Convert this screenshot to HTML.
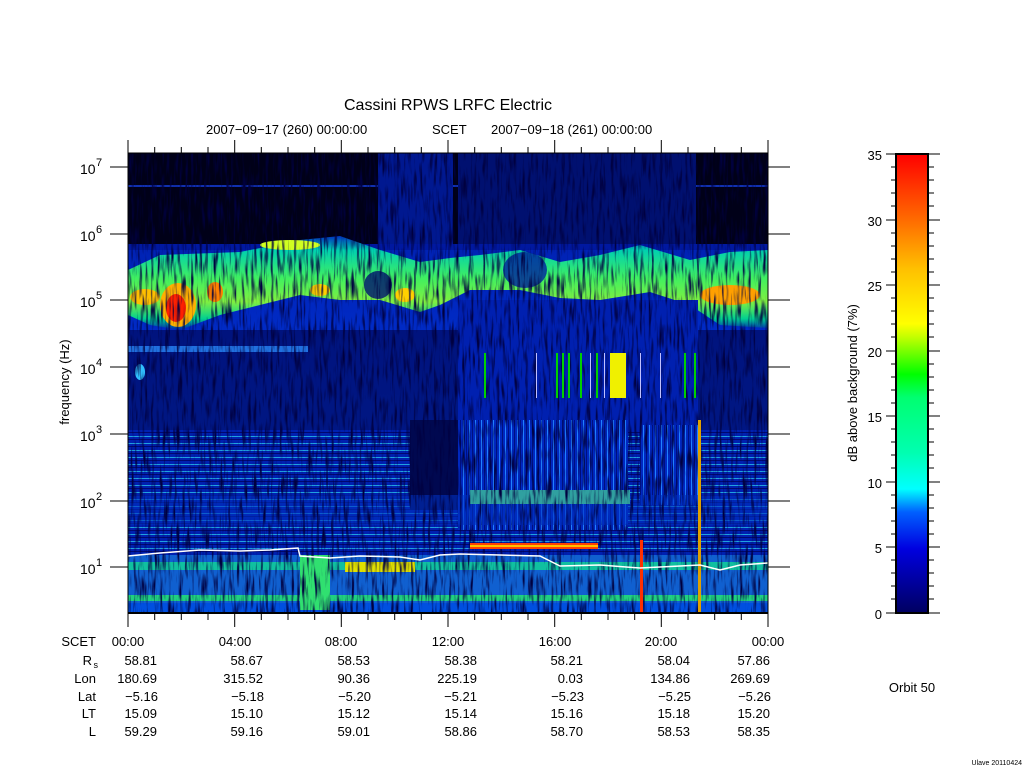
<!DOCTYPE html>
<html><head><meta charset="utf-8"><style>
html,body{margin:0;padding:0;background:#fff;}
body{width:1024px;height:768px;position:relative;overflow:hidden;font-family:"Liberation Sans",sans-serif;color:#000;}
svg{position:absolute;left:0;top:0;}
text{font-family:"Liberation Sans",sans-serif;fill:#000;}
</style></head><body>
<svg width="1024" height="768" viewBox="0 0 1024 768" font-size="13">
<defs>
<linearGradient id="cb" x1="0" y1="1" x2="0" y2="0">
<stop offset="0" stop-color="#000060"/>
<stop offset="0.14" stop-color="#0000e0"/>
<stop offset="0.22" stop-color="#0060ff"/>
<stop offset="0.27" stop-color="#00ffff"/>
<stop offset="0.35" stop-color="#00ffb0"/>
<stop offset="0.47" stop-color="#00ff70"/>
<stop offset="0.52" stop-color="#00ff00"/>
<stop offset="0.6" stop-color="#c0ff00"/>
<stop offset="0.63" stop-color="#ffff00"/>
<stop offset="0.75" stop-color="#ffc000"/>
<stop offset="0.85" stop-color="#ff7000"/>
<stop offset="1" stop-color="#ff0000"/>
</linearGradient>
<linearGradient id="band" x1="0" y1="0" x2="0" y2="1">
<stop offset="0" stop-color="#0030c0"/>
<stop offset="0.15" stop-color="#00d0b0"/>
<stop offset="0.45" stop-color="#40f060"/>
<stop offset="0.7" stop-color="#80f040"/>
<stop offset="0.88" stop-color="#00d090"/>
<stop offset="1" stop-color="#0020b0"/>
</linearGradient>
<linearGradient id="low" x1="0" y1="0" x2="0" y2="1">
<stop offset="0" stop-color="#0018a0"/>
<stop offset="0.5" stop-color="#0030d0"/>
<stop offset="0.8" stop-color="#0040e0"/>
<stop offset="1" stop-color="#10a0d0"/>
</linearGradient>
<pattern id="vl" width="6" height="10" patternUnits="userSpaceOnUse">
<rect width="6" height="10" fill="#0028c0"/><rect x="1" width="1" height="10" fill="#2080ff"/><rect x="4" width="1" height="10" fill="#001080"/>
</pattern>
<pattern id="hl" width="10" height="7" patternUnits="userSpaceOnUse">
<rect width="10" height="7" fill="#0020b0"/><rect y="2" width="10" height="1" fill="#20a0e0"/><rect y="5" width="10" height="1" fill="#000870"/>
</pattern>
<filter id="nz" x="0" y="0" width="100%" height="100%">
<feTurbulence type="fractalNoise" baseFrequency="0.35 0.04" numOctaves="2" seed="3"/>
<feColorMatrix type="matrix" values="0 0 0 0 0  0 0 0 0 0  0 0 0 0 0.05  3 0 0 0 -1.4"/>
</filter>
</defs>

<rect x="128" y="153" width="640" height="460" fill="url(#low)"/>
<rect x="128" y="153" width="640" height="95" fill="#000018"/>
<rect x="128" y="185" width="640" height="2" fill="#1030b0"/>
<rect x="378" y="153" width="75" height="95" fill="#001890"/>
<rect x="458" y="153" width="238" height="95" fill="#001070"/>
<rect x="128" y="244" width="640" height="6" fill="#0018a0"/>
<path d="M128 270 L160 255 L240 252 L300 240 L340 236 L380 250 L420 262 L450 258 L480 255 L520 250 L560 262 L600 255 L640 245 L690 260 L730 252 L768 250 L768 328 L720 325 L690 305 L650 292 L600 300 L560 298 L520 290 L470 290 L440 305 L420 312 L380 300 L340 300 L300 295 L260 305 L220 315 L180 330 L150 325 L128 315 Z" fill="url(#band)"/>
<ellipse cx="525" cy="270" rx="22" ry="18" fill="#0020a0" opacity="0.8"/>
<ellipse cx="378" cy="285" rx="14" ry="14" fill="#001070" opacity="0.8"/>
<ellipse cx="178" cy="305" rx="18" ry="22" fill="#ffb000"/>
<ellipse cx="176" cy="308" rx="10" ry="14" fill="#ff2000"/>
<ellipse cx="145" cy="297" rx="15" ry="8" fill="#ffc000"/>
<ellipse cx="215" cy="292" rx="8" ry="10" fill="#ff8000"/>
<ellipse cx="730" cy="295" rx="30" ry="10" fill="#ffa000"/>
<ellipse cx="405" cy="295" rx="10" ry="7" fill="#ffd000"/>
<ellipse cx="320" cy="290" rx="10" ry="6" fill="#ffd000"/>
<ellipse cx="290" cy="245" rx="30" ry="5" fill="#d0ff20"/>
<rect x="128" y="330" width="640" height="100" fill="#000a60" opacity="0.7"/>
<rect x="458" y="300" width="240" height="130" fill="#0020b0"/>
<rect x="128" y="346" width="180" height="6" fill="#2070e0"/>
<ellipse cx="140" cy="372" rx="5" ry="8" fill="#30c0ff"/>
<rect x="128" y="430" width="640" height="183" fill="url(#hl)"/>
<rect x="458" y="420" width="170" height="110" fill="url(#vl)"/>
<rect x="640" y="425" width="60" height="80" fill="url(#vl)"/>
<rect x="410" y="420" width="48" height="90" fill="#000850"/>
<rect x="128" y="495" width="640" height="30" fill="#0030c0" opacity="0.6"/>
<rect x="470" y="490" width="160" height="14" fill="#30a0a0"/>
<rect x="128" y="555" width="640" height="58" fill="#1060d0"/>
<rect x="128" y="562" width="640" height="8" fill="#10c0a0"/>
<rect x="128" y="595" width="640" height="6" fill="#20d080"/>
<rect x="128" y="603" width="640" height="10" fill="#0050e0"/>
<rect x="300" y="555" width="30" height="55" fill="#30e070"/>
<rect x="345" y="562" width="70" height="10" fill="#e0e000"/>
<rect x="128" y="153" width="640" height="460" filter="url(#nz)"/>
<rect x="610" y="353" width="16" height="45" fill="#f0f000"/>
<g fill="#00d000">
<rect x="484" y="353" width="2" height="45"/><rect x="556" y="353" width="2" height="45"/><rect x="562" y="353" width="2" height="45"/><rect x="568" y="353" width="2" height="45"/><rect x="580" y="353" width="2" height="45"/><rect x="596" y="353" width="2" height="45"/><rect x="684" y="353" width="2" height="45"/><rect x="694" y="353" width="2" height="45"/>
</g>
<g fill="#c0c0ff">
<rect x="536" y="353" width="1" height="45"/><rect x="590" y="353" width="1" height="45"/><rect x="604" y="353" width="1" height="45"/><rect x="640" y="353" width="1" height="45"/><rect x="660" y="353" width="1" height="45"/>
</g>
<rect x="470" y="543" width="128" height="6" fill="#ff4000"/>
<rect x="470" y="545" width="128" height="2" fill="#ffc000"/>
<rect x="640" y="540" width="3" height="73" fill="#ff3000"/>
<rect x="698" y="420" width="3" height="193" fill="#e0a000"/>
<polyline fill="none" stroke="#fff" stroke-width="1.5" points="128,556 160,553 200,550 240,551 270,550 298,548 300,556 330,558 360,556 400,557 420,560 440,555 460,554 500,555 540,556 560,566 600,565 640,568 680,566 700,565 720,570 740,565 768,563"/>
<rect x="128" y="153" width="640" height="460" fill="none" stroke="#000" stroke-width="1"/>

<g stroke="#000" stroke-width="1">
<line x1="128" y1="613" x2="768" y2="613" stroke-width="2"/>
<path d="M128 140V153M234.7 140V153M341.3 140V153M448 140V153M554.7 140V153M661.3 140V153M768 140V153"/>
<path d="M154.7 147V153M181.3 147V153M208 147V153M261.3 147V153M288 147V153M314.7 147V153M368 147V153M394.7 147V153M421.3 147V153M474.7 147V153M501.3 147V153M528 147V153M581.3 147V153M608 147V153M634.7 147V153M688 147V153M714.7 147V153M741.3 147V153"/>
<path d="M128 613V627M234.7 613V627M341.3 613V627M448 613V627M554.7 613V627M661.3 613V627M768 613V627"/>
<path d="M154.7 613V620M181.3 613V620M208 613V620M261.3 613V620M288 613V620M314.7 613V620M368 613V620M394.7 613V620M421.3 613V620M474.7 613V620M501.3 613V620M528 613V620M581.3 613V620M608 613V620M634.7 613V620M688 613V620M714.7 613V620M741.3 613V620"/>
<path d="M110 167H128M110 234H128M110 300H128M110 367H128M110 434H128M110 501H128M110 567H128"/>
<path d="M768 167H790M768 234H790M768 300H790M768 367H790M768 434H790M768 501H790M768 567H790"/>
</g>
<g font-size="14">
<text x="80" y="174">10</text><text x="96" y="166" font-size="11">7</text>
<text x="80" y="241">10</text><text x="96" y="233" font-size="11">6</text>
<text x="80" y="307">10</text><text x="96" y="299" font-size="11">5</text>
<text x="80" y="374">10</text><text x="96" y="366" font-size="11">4</text>
<text x="80" y="441">10</text><text x="96" y="433" font-size="11">3</text>
<text x="80" y="508">10</text><text x="96" y="500" font-size="11">2</text>
<text x="80" y="574">10</text><text x="96" y="566" font-size="11">1</text>
</g>
<text x="0" y="0" transform="translate(69,382) rotate(-90)" text-anchor="middle">frequency (Hz)</text>
<text x="448" y="110" text-anchor="middle" font-size="16">Cassini RPWS LRFC Electric</text>
<text x="206" y="134">2007−09−17 (260) 00:00:00</text>
<text x="432" y="134">SCET</text>
<text x="491" y="134">2007−09−18 (261) 00:00:00</text>

<g text-anchor="end">
<text x="96" y="646">SCET</text>
<text x="92" y="665">R</text><text x="98" y="668" font-size="9">s</text>
<text x="96" y="683">Lon</text>
<text x="96" y="701">Lat</text>
<text x="96" y="718">LT</text>
<text x="96" y="736">L</text>
</g>
<g text-anchor="middle">
<text x="128" y="646">00:00</text><text x="235" y="646">04:00</text><text x="341" y="646">08:00</text><text x="448" y="646">12:00</text><text x="555" y="646">16:00</text><text x="661" y="646">20:00</text><text x="768" y="646">00:00</text>
</g>
<g text-anchor="end">
<text x="157" y="665">58.81</text><text x="263" y="665">58.67</text><text x="370" y="665">58.53</text><text x="477" y="665">58.38</text><text x="583" y="665">58.21</text><text x="690" y="665">58.04</text><text x="770" y="665">57.86</text>
<text x="157" y="683">180.69</text><text x="263" y="683">315.52</text><text x="370" y="683">90.36</text><text x="477" y="683">225.19</text><text x="583" y="683">0.03</text><text x="690" y="683">134.86</text><text x="770" y="683">269.69</text>
<text x="158" y="701">−5.16</text><text x="264" y="701">−5.18</text><text x="371" y="701">−5.20</text><text x="477" y="701">−5.21</text><text x="584" y="701">−5.23</text><text x="691" y="701">−5.25</text><text x="771" y="701">−5.26</text>
<text x="157" y="718">15.09</text><text x="263" y="718">15.10</text><text x="370" y="718">15.12</text><text x="477" y="718">15.14</text><text x="583" y="718">15.16</text><text x="690" y="718">15.18</text><text x="770" y="718">15.20</text>
<text x="157" y="736">59.29</text><text x="263" y="736">59.16</text><text x="370" y="736">59.01</text><text x="477" y="736">58.86</text><text x="583" y="736">58.70</text><text x="690" y="736">58.53</text><text x="770" y="736">58.35</text>
</g>

<rect x="896" y="154" width="32" height="459" fill="url(#cb)" stroke="#000" stroke-width="2"/>
<g stroke="#000" stroke-width="1">
<path d="M886 154H896M886 220H896M886 285H896M886 351H896M886 416H896M886 482H896M886 547H896M886 613H896"/>
<path d="M928 154H940M928 220H940M928 285H940M928 351H940M928 416H940M928 482H940M928 547H940M928 613H940"/>
<path d="M891 167H896M891 180H896M891 193H896M891 206H896M891 233H896M891 246H896M891 259H896M891 272H896M891 298H896M891 311H896M891 324H896M891 337H896M891 364H896M891 377H896M891 390H896M891 403H896M891 429H896M891 442H896M891 455H896M891 468H896M891 495H896M891 508H896M891 521H896M891 534H896M891 560H896M891 573H896M891 586H896M891 599H896"/>
<path d="M928 167H934M928 180H934M928 193H934M928 206H934M928 233H934M928 246H934M928 259H934M928 272H934M928 298H934M928 311H934M928 324H934M928 337H934M928 364H934M928 377H934M928 390H934M928 403H934M928 429H934M928 442H934M928 455H934M928 468H934M928 495H934M928 508H934M928 521H934M928 534H934M928 560H934M928 573H934M928 586H934M928 599H934"/>
</g>
<g text-anchor="end">
<text x="882" y="160">35</text><text x="882" y="226">30</text><text x="882" y="291">25</text><text x="882" y="357">20</text><text x="882" y="422">15</text><text x="882" y="488">10</text><text x="882" y="553">5</text><text x="882" y="619">0</text>
</g>
<text x="0" y="0" transform="translate(857,383) rotate(-90)" text-anchor="middle">dB above background (7%)</text>
<text x="912" y="692" text-anchor="middle">Orbit 50</text>
<text x="1022" y="765" text-anchor="end" font-size="7">Ulave 20110424</text>
</svg>
</body></html>
